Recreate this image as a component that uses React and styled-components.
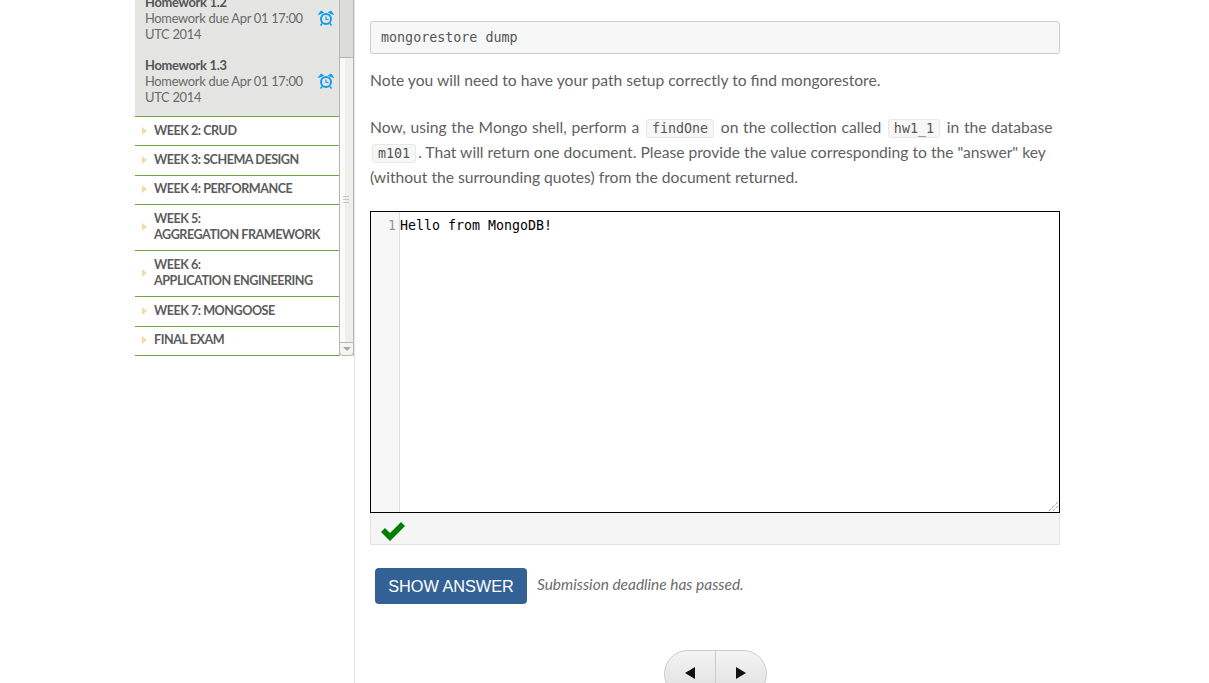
import React from 'react';
import styled, { createGlobalStyle } from 'styled-components';

const Global = createGlobalStyle`
  html, body {
    margin: 0;
    padding: 0;
    background: #fff;
    height: 683px;
    overflow: hidden;
  }
  body {
    font-family: "Lato", "Liberation Sans", sans-serif;
    color: #555;
  }
`;

const Page = styled.div`
  display: flex;
  width: 1209px;
  height: 683px;
  padding-left: 135px;
  box-sizing: border-box;
  overflow: hidden;
`;

const Sidebar = styled.aside`
  width: 220px;
  flex: none;
  box-sizing: border-box;
  border-right: 1px solid #e6e6e4;
  display: flex;
  align-items: flex-start;
`;

const Accordion = styled.div`
  width: 204px;
  flex: none;
  margin-top: -6px;
`;

const Lessons = styled.ul`
  list-style: none;
  margin: 0;
  padding: 0 0 11px;
  background: #e5e5e3;
`;

const Lesson = styled.li`
  display: flex;
  justify-content: space-between;
  height: 48px;
  padding: 0 5px 0 10px;
  font-size: 12.9px;
  letter-spacing: -0.3px;
  line-height: 16px;
  color: #6a6a6a;
  white-space: nowrap;
  & + & {
    margin-top: 15px;
  }
  b {
    display: block;
    color: #555;
  }
  svg {
    margin-top: 16px;
    flex: none;
  }
`;

const Week = styled.div`
  display: flex;
  align-items: center;
  gap: 7px;
  box-sizing: border-box;
  height: ${p => (p.$tall ? 46 : 29.4)}px;
  padding: 0 0 1px 7px;
  border-top: 1px solid #6fa53b;
  font-size: 12.6px;
  font-weight: 700;
  letter-spacing: -0.48px;
  line-height: 16px;
  color: #5c5c5c;
  white-space: nowrap;
  &:last-child {
    height: 30.4px;
    border-bottom: 1px solid #6fa53b;
  }
  &::before {
    content: '';
    flex: none;
    border-left: 5px solid #f7d9a8;
    border-top: 4.5px solid transparent;
    border-bottom: 4.5px solid transparent;
  }
`;

const Scrollbar = styled.div`
  width: 15px;
  height: 356px;
  flex: none;
  box-sizing: border-box;
  position: relative;
  background: linear-gradient(90deg, #fbfbf9 0 40%, #efefed 40%);
  border-left: 1px solid #b5b5b1;
  border-right: 1px solid #b5b5b1;
`;

const Thumb = styled.div`
  height: 58px;
  box-sizing: border-box;
  background: #dcdcda;
  border-bottom: 1px solid #b5b5b1;
`;

const Grip = styled.div`
  position: absolute;
  left: 3px;
  top: 196px;
  width: 6px;
  height: 7px;
  background: repeating-linear-gradient(#c4c4c0 0 1px, transparent 1px 3px);
`;

const ScrollDown = styled.div`
  position: absolute;
  left: -1px;
  bottom: 0;
  width: 15px;
  height: 14px;
  box-sizing: border-box;
  background: #f5f5f3;
  border: 1px solid #b5b5b1;
  border-radius: 0 0 4px 4px;
  display: flex;
  align-items: center;
  justify-content: center;
  &::after {
    content: '';
    border-top: 4px solid #a8a8a8;
    border-left: 4px solid transparent;
    border-right: 4px solid transparent;
  }
`;

const Main = styled.main`
  width: 690px;
  margin-left: 15px;
  flex: none;
  padding-top: 21px;
  font-size: 15.63px;
  line-height: 25px;
  color: #606060;
`;

const Pre = styled.pre`
  margin: 0 0 14px;
  padding: 0 10px;
  height: 33px;
  box-sizing: border-box;
  background: #f7f7f7;
  border: 1px solid #ccc;
  border-radius: 3px;
  font: 13.35px/32px "DejaVu Sans Mono", monospace;
  color: #555;
`;

const Para = styled.p`
  margin: 0 0 21px;
  & + & {
    margin-top: 22px;
  }
`;

const FirstLine = styled.span`
  word-spacing: 0.7px;
`;

const Code = styled.code`
  font: 13.35px "DejaVu Sans Mono", monospace;
  color: #555;
  background: #f7f7f7;
  border: 1px solid #e8e8e8;
  border-radius: 3px;
  padding: 1px 5px;
  margin: 0 2px;
`;

const Editor = styled.div`
  height: 302px;
  box-sizing: border-box;
  border: 1px solid #000;
  display: flex;
  position: relative;
  font: 13.3px/27px "DejaVu Sans Mono", monospace;
`;

const Gutter = styled.div`
  width: 29px;
  box-sizing: border-box;
  padding-right: 3px;
  text-align: right;
  color: #999;
  background: #f7f7f7;
  border-right: 1px solid #ddd;
`;

const Lines = styled.div`
  color: #000;
`;

const Resizer = styled.svg`
  position: absolute;
  right: 1px;
  bottom: 1px;
`;

const Status = styled.div`
  height: 32px;
  box-sizing: border-box;
  background: #f5f5f5;
  border: 1px solid #e3e3e3;
  border-top: 0;
  padding: 9px 0 0 10px;
  line-height: 0;
`;

const ActionRow = styled.div`
  display: flex;
  align-items: center;
  gap: 10px;
  margin: 23px 0 0 5px;
`;

const ShowAnswer = styled.button`
  width: 152px;
  height: 36px;
  padding: 0;
  background: #336195;
  color: #fff;
  border: 0;
  border-radius: 4px;
  font: 16.3px "Liberation Sans", sans-serif;
`;

const Deadline = styled.em`
  font-size: 15.45px;
  color: #6b6b6b;
  margin-bottom: 3px;
`;

const Pager = styled.div`
  display: flex;
  width: 103px;
  height: 48px;
  box-sizing: border-box;
  margin: 46px 0 0 294px;
  border: 1px solid #ccc;
  border-radius: 24px;
  background: linear-gradient(#f4f4f4, #dedede);
  overflow: hidden;
`;

const PageButton = styled.div`
  flex: 1 1 0;
  box-sizing: border-box;
  display: flex;
  justify-content: center;
  padding-top: 16px;
  & + & {
    border-left: 1px solid #ccc;
  }
  &::after {
    content: '';
    height: 0;
    border-top: 6px solid transparent;
    border-bottom: 6px solid transparent;
    ${p => (p.$next ? 'border-left: 10px solid #111;' : 'border-right: 10px solid #111;')}
  }
`;

function Alarm() {
  return (
    <svg width="16" height="16" viewBox="0 0 16 16" fill="none" stroke="#109fe8">
      <circle cx="8" cy="9" r="5" strokeWidth="2" />
      <path d="M8 6.5V9.5H10.5" strokeWidth="1.2" />
      <path d="M0.5 4.5 3 1 5.5 2.5Z M15.5 4.5 13 1 10.5 2.5Z" fill="#109fe8" strokeWidth="1" />
      <path d="M4 13.5 2.5 15.5M12 13.5 13.5 15.5" strokeWidth="1.6" />
    </svg>
  );
}

const lessons = ['Homework 1.2', 'Homework 1.3'];
const weeks = [
  ['WEEK 2: CRUD'],
  ['WEEK 3: SCHEMA DESIGN'],
  ['WEEK 4: PERFORMANCE'],
  ['WEEK 5:', 'AGGREGATION FRAMEWORK'],
  ['WEEK 6:', 'APPLICATION ENGINEERING'],
  ['WEEK 7: MONGOOSE'],
  ['FINAL EXAM'],
];

export default function App() {
  return (
    <>
      <Global />
      <Page>
        <Sidebar>
          <Accordion>
            <Lessons>
              {lessons.map(name => (
                <Lesson key={name}>
                  <div>
                    <b>{name}</b>
                    Homework due Apr 01 17:00
                    <br />
                    UTC 2014
                  </div>
                  <Alarm />
                </Lesson>
              ))}
            </Lessons>
            {weeks.map(lines => (
              <Week key={lines[0]} $tall={lines.length > 1}>
                <div>
                  {lines.map(line => (
                    <div key={line}>{line}</div>
                  ))}
                </div>
              </Week>
            ))}
          </Accordion>
          <Scrollbar>
            <Thumb />
            <Grip />
            <ScrollDown />
          </Scrollbar>
        </Sidebar>
        <Main>
          <Pre>mongorestore dump</Pre>
          <Para>Note you will need to have your path setup correctly to find mongorestore.</Para>
          <Para>
            <FirstLine>
              Now, using the Mongo shell, perform a <Code>findOne</Code> on the collection called{' '}
              <Code>hw1_1</Code> in the database
            </FirstLine>{' '}
            <Code>m101</Code>. That will return one document. Please provide the value corresponding
            to the "answer" key (without the surrounding quotes) from the document returned.
          </Para>
          <Editor>
            <Gutter>1</Gutter>
            <Lines>Hello from MongoDB!</Lines>
            <Resizer width="9" height="9" viewBox="0 0 9 9" stroke="#777" strokeDasharray="1 1">
              <path d="M0 9 9 0M4 9 9 4" />
            </Resizer>
          </Editor>
          <Status>
            <svg width="24" height="19" viewBox="0 0 24 19" fill="#008000">
              <path d="M0 10 4 6 9 11 20 0 24 4 9 19Z" />
            </svg>
          </Status>
          <ActionRow>
            <ShowAnswer>SHOW ANSWER</ShowAnswer>
            <Deadline>Submission deadline has passed.</Deadline>
          </ActionRow>
          <Pager>
            <PageButton />
            <PageButton $next />
          </Pager>
        </Main>
      </Page>
    </>
  );
}
